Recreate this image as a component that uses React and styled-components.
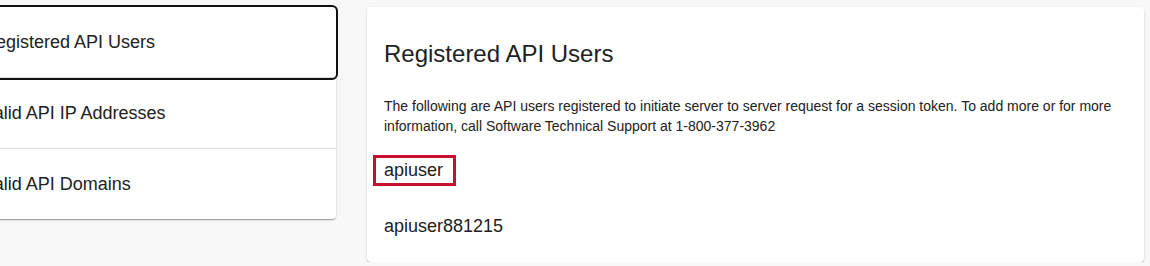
import React from "react";
import styled, { createGlobalStyle } from "styled-components";

const GlobalStyle = createGlobalStyle`
  html, body { margin: 0; padding: 0; background: #f8f8f8; }
  body { font-family: "Liberation Sans", Arial, sans-serif; color: #212121; }
`;

const Page = styled.div`
  display: grid;
  grid-template-columns: 376px 777px;
  column-gap: 31px;
  align-items: start;
  margin-left: -40px;
  padding-top: 7px;
`;

const Card = styled.div`
  background: #fff;
  border-radius: 4px;
  box-shadow: 0 2px 1px -1px rgba(0,0,0,0.2), 0 1px 1px 0 rgba(0,0,0,0.14), 0 1px 3px 0 rgba(0,0,0,0.12);
`;

const NavList = styled(Card)`
  display: flex;
  flex-direction: column;
`;

const NavItem = styled.div`
  height: 70px;
  display: flex;
  align-items: center;
  padding-left: 23px;
  font-size: 18px;
  color: #212121;
  border-bottom: ${p => (p.$last ? "none" : "1px solid #e0e0e0")};
  border-radius: ${p => (p.$active ? "4px" : "0")};
  outline: ${p => (p.$active ? "2px solid #111" : "none")};
  outline-offset: 0;
  position: relative;
  z-index: ${p => (p.$active ? 1 : 0)};
`;

const Content = styled(Card)`
  padding: 33px 17px 20px;
  display: flex;
  flex-direction: column;
`;

const Title = styled.h2`
  margin: 0;
  font-size: 24px;
  line-height: 28px;
  font-weight: 400;
  color: #212121;
`;

const Description = styled.p`
  margin: 28px 0 19px;
  font-size: 14px;
  line-height: 20px;
  color: #212121;
`;

const UserList = styled.div`
  display: flex;
  flex-direction: column;
  gap: 25px;
  align-items: flex-start;
`;

const UserItem = styled.div`
  font-size: 18px;
  line-height: 25px;
  margin-left: -11px;
  padding: 0 10px 0 8px;
  border: 3px solid ${p => (p.$highlight ? "#c8102e" : "transparent")};
  color: #212121;
`;

const navItems = ["Registered API Users", "Valid API IP Addresses", "Valid API Domains"];
const users = ["apiuser", "apiuser881215"];

export default function App() {
  return (
    <>
      <GlobalStyle />
      <Page>
        <NavList>
          {navItems.map((label, i) => (
            <NavItem key={label} $active={i === 0} $last={i === navItems.length - 1}>
              {label}
            </NavItem>
          ))}
        </NavList>
        <Content>
          <Title>Registered API Users</Title>
          <Description>
            The following are API users registered to initiate server to server request for a session token. To add more or for more information, call Software Technical Support at 1-800-377-3962
          </Description>
          <UserList>
            {users.map((u, i) => (
              <UserItem key={u} $highlight={i === 0}>{u}</UserItem>
            ))}
          </UserList>
        </Content>
      </Page>
    </>
  );
}
